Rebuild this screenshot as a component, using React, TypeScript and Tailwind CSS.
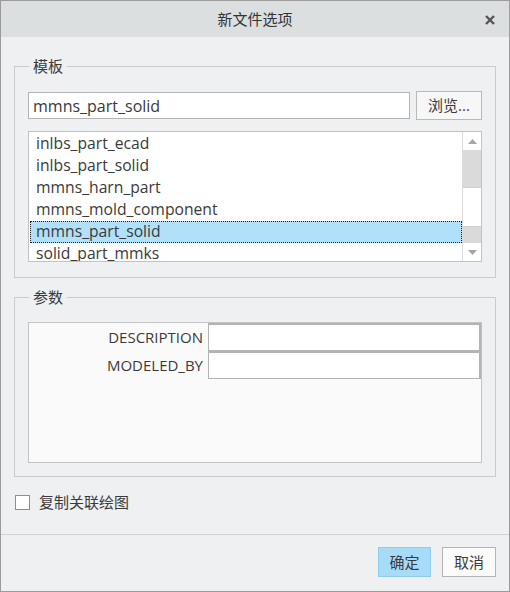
const TEMPLATES = [
  "inlbs_part_ecad",
  "inlbs_part_solid",
  "mmns_harn_part",
  "mmns_mold_component",
  "mmns_part_solid",
  "solid_part_mmks",
];

const PARAMS = ["DESCRIPTION", "MODELED_BY"];

const FONT = "font-['Segoe_UI','Open_Sans','Noto_Sans_CJK_SC',sans-serif]";

function Arrow({ down }: { down?: boolean }) {
  return (
    <svg width="9" height="5" viewBox="0 0 9 5">
      <path d={down ? "M0 0h9L4.5 5z" : "M0 5h9L4.5 0z"} fill="#a6a6a6" />
    </svg>
  );
}

export default function App() {
  return (
    <div
      className={`${FONT} flex h-[592px] w-[510px] flex-col border border-[#9b9b9b] bg-[#eef0f1] text-[15px] text-[#3a3a3a]`}
    >
      <div className="relative flex h-[36px] shrink-0 items-center justify-center bg-[#dcdfe0]">
        <span className="text-[15px] text-[#333]">新文件选项</span>
        <svg
          className="absolute right-[14px] top-[14px]"
          width="10"
          height="10"
          viewBox="0 0 10 10"
        >
          <path d="M1 1l8 8M9 1l-8 8" stroke="#555" strokeWidth="2.4" />
        </svg>
      </div>

      <div className="flex flex-1 flex-col px-[13px]">
        <fieldset className="mt-[19px] border border-[#c9cbcc] px-[13px] pb-[15px] pt-[15px]">
          <legend className="ml-[1px] px-[4px] leading-[20px]">模板</legend>
          <div className="flex items-center gap-[6px]">
            <div className="flex h-[27px] w-[382px] items-center border border-[#b4b4b4] bg-white pl-[4px] text-[16px]">
              mmns_part_solid
            </div>
            <button className="h-[29px] w-[66px] border border-[#b9b9b9] bg-[#f7f7f7] text-[15px]">
              浏览...
            </button>
          </div>
          <div className="mt-[11px] flex h-[131px] border border-[#c3c3c3] bg-white">
            <div className="flex-1 overflow-hidden pt-[1px] pl-[1px]">
              {TEMPLATES.map((t) => (
                <div
                  key={t}
                  className={
                    t === "mmns_part_solid"
                      ? "flex h-[22px] items-center border border-dotted border-[#222] bg-[#b1e0fa] pl-[5px] text-[15.7px]"
                      : "flex h-[22px] items-center pl-[6px] text-[15.7px]"
                  }
                >
                  {t}
                </div>
              ))}
            </div>
            <div className="flex w-[19px] flex-col border-l border-[#dcdcdc]">
              <div className="flex h-[18px] items-center justify-center">
                <Arrow />
              </div>
              <div className="h-[37px] bg-[#dadada]" />
              <div className="h-[40px] border-y border-[#d0d0d0] bg-white" />
              <div className="h-[16px] bg-[#dadada]" />
              <div className="flex flex-1 items-center justify-center">
                <Arrow down />
              </div>
            </div>
          </div>
        </fieldset>

        <fieldset className="mt-[9px] border border-[#c9cbcc] px-[13px] pb-[13px] pt-[15px]">
          <legend className="ml-[1px] px-[4px] leading-[20px]">参数</legend>
          <div className="h-[141px] border border-[#c3c3c3] bg-[#fafafa]">
            {PARAMS.map((p) => (
              <div key={p} className="flex h-[28px]">
                <div className="flex w-[179px] items-center justify-end pr-[5px] text-[15px]">
                  {p}
                </div>
                <div className="flex-1 border border-[#b4b4b4] border-t-2 border-r-2 bg-white" />
              </div>
            ))}
          </div>
        </fieldset>

        <label className="mt-[14px] flex items-center gap-[9px] pl-[1px]">
          <span className="h-[15px] w-[15px] border border-[#8e8e8e] bg-white" />
          <span>复制关联绘图</span>
        </label>
      </div>

      <div className="flex h-[57px] shrink-0 items-start justify-end gap-[11px] border-t border-[#cfd1d2] pr-[13px] pt-[12px]">
        <button className="h-[30px] w-[53px] border border-[#8fcdf0] bg-[#a6dcf8]">
          确定
        </button>
        <button className="h-[30px] w-[54px] border border-[#b4b4b4] bg-[#fbfbfb]">
          取消
        </button>
      </div>
    </div>
  );
}
